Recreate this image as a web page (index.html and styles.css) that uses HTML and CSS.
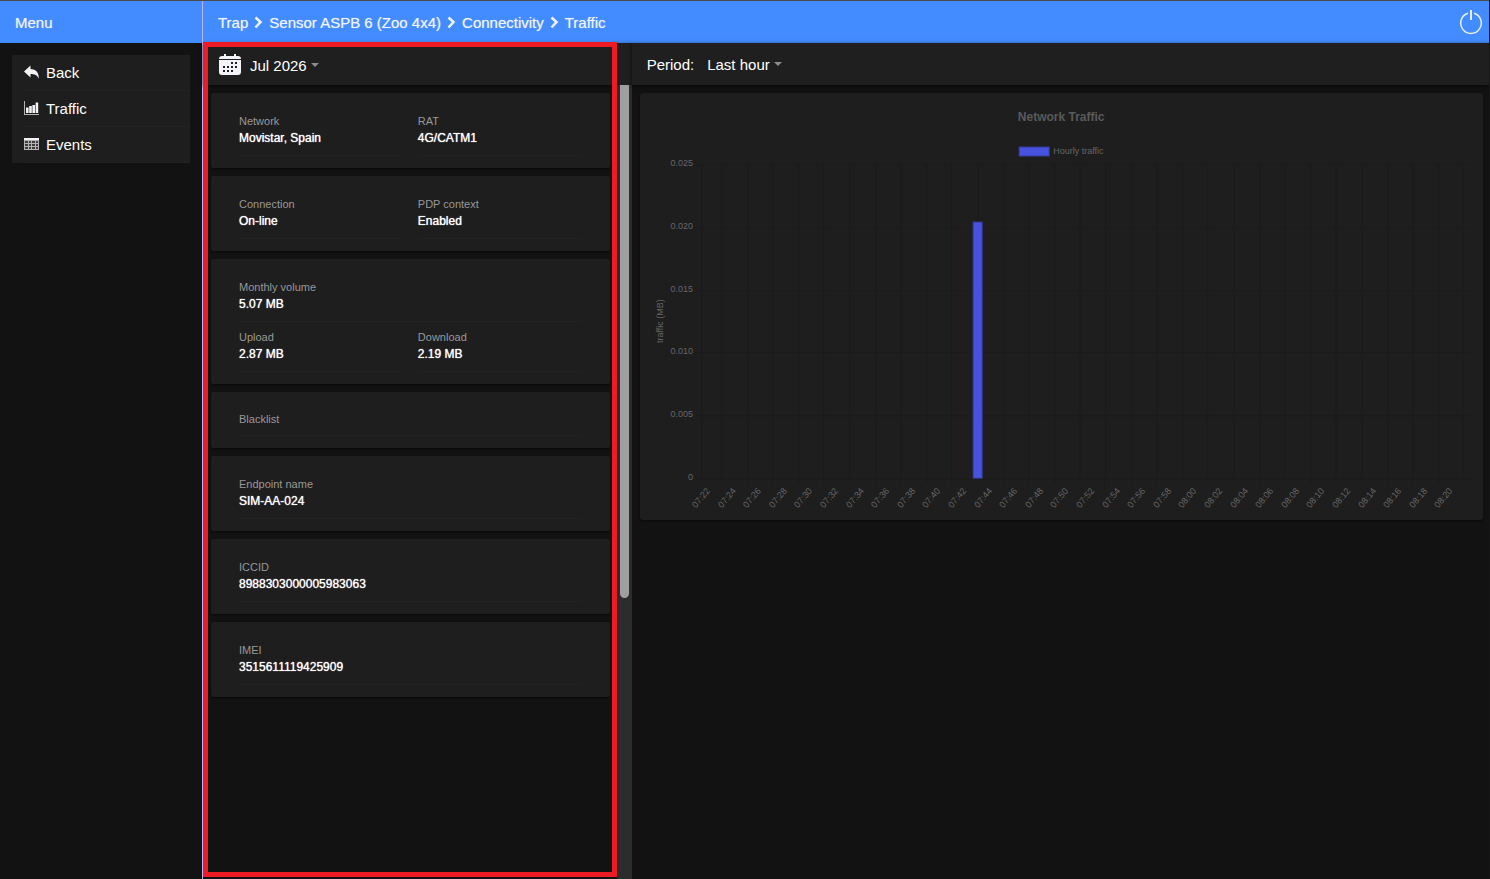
FILE: index.html
```html
<!DOCTYPE html>
<html lang="en">
<head>
    <meta charset="UTF-8">
    <meta name="viewport" content="width=device-width, initial-scale=1.0">
    <title>Traffic</title>
    <link rel="stylesheet" href="styles.css">
</head>
<body>

<aside class="sidebar">
    <header class="navbar">Menu</header>
    <nav class="menu">
        <a href="#back">
            <svg class="icon" viewBox="0 0 15 15"><path d="M6.500 .5 0 6.500l6.500 6V9c4 0 6.800 1 8.300 4.800C15 7.500 12 4.200 6.500 4z"/></svg>
            Back
        </a>
        <a href="#traffic">
            <svg class="icon" viewBox="0 0 15 15"><path class="dim" d="M0 0h1v13h14v1H0z"/><path d="M2 6.500h2.600V12H2zM5.200 5h2.600v7H5.200zM8.400 4H11v8H8.400zM11.600 1.500h2.600V12h-2.600z"/></svg>
            Traffic
        </a>
        <a href="#events">
            <svg class="icon" viewBox="0 0 15 15"><path class="dim" d="M0 3h15v10H0z"/><path d="M0 1h15v2H0z"/><path class="hole" d="M1 4h3v2H1zM5 4h2v2H5zM8 4h3v2H8zM12 4h2v2h-2zM1 7h3v2H1zM5 7h2v2H5zM8 7h3v2H8zM12 7h2v2h-2zM1 10h3v2H1zM5 10h2v2H5zM8 10h3v2H8zM12 10h2v2h-2z"/></svg>
            Events
        </a>
    </nav>
</aside>

<main class="main">
    <header class="navbar">
        <nav class="breadcrumb">
            <a href="#trap">Trap</a>
            <svg viewBox="0 0 9 14"><path d="M1.500 1.500 6.500 6l-5 5.500"/></svg>
            <a href="#sensor">Sensor ASPB 6 (Zoo 4x4)</a>
            <svg viewBox="0 0 9 14"><path d="M1.500 1.500 6.500 6l-5 5.500"/></svg>
            <a href="#connectivity">Connectivity</a>
            <svg viewBox="0 0 9 14"><path d="M1.500 1.500 6.500 6l-5 5.500"/></svg>
            <a href="#traffic">Traffic</a>
        </nav>
        <button class="power" aria-label="Log out">
            <svg viewBox="0 0 24 26"><path d="M9 3.300a10.300 10.300 0 1 0 6 0"/><path class="bar" d="M12 0v10"/></svg>
        </button>
    </header>

    <div class="panes">
        <section class="pane info">
            <div class="toolbar">
                <svg class="calendar" viewBox="0 0 22 22">
                    <path d="M5 0h2v2h8V0h2v2h2a3 3 0 0 1 3 3H0a3 3 0 0 1 3-3h2zM0 6h22v12a3 3 0 0 1-3 3H3a3 3 0 0 1-3-3z"/>
                    <path class="days" d="M12 8h2v2h-2zM16 8h2v2h-2zM4 12h2v2H4zM8 12h2v2H8zM12 12h2v2h-2zM16 12h2v2h-2zM4 16h2v2H4zM8 16h2v2H8zM12 16h2v2h-2z"/>
                </svg>
                <label class="picker"><select aria-label="Month"><option>Jul 2026</option></select></label>
            </div>
            <div class="scroll">
                <div class="cards">
                    <dl class="card">
                        <div class="item"><dt>Network</dt><dd>Movistar, Spain</dd></div>
                        <div class="item"><dt>RAT</dt><dd>4G/CATM1</dd></div>
                    </dl>
                    <dl class="card">
                        <div class="item"><dt>Connection</dt><dd>On-line</dd></div>
                        <div class="item"><dt>PDP context</dt><dd>Enabled</dd></div>
                    </dl>
                    <dl class="card">
                        <div class="item wide"><dt>Monthly volume</dt><dd>5.07 MB</dd></div>
                        <div class="item"><dt>Upload</dt><dd>2.87 MB</dd></div>
                        <div class="item"><dt>Download</dt><dd>2.19 MB</dd></div>
                    </dl>
                    <dl class="card short">
                        <div class="item wide"><dt>Blacklist</dt></div>
                    </dl>
                    <dl class="card">
                        <div class="item wide"><dt>Endpoint name</dt><dd>SIM-AA-024</dd></div>
                    </dl>
                    <dl class="card">
                        <div class="item wide"><dt>ICCID</dt><dd>8988303000005983063</dd></div>
                    </dl>
                    <dl class="card">
                        <div class="item wide"><dt>IMEI</dt><dd>3515611119425909</dd></div>
                    </dl>
                </div>
                <div class="track"><div class="thumb"></div></div>
            </div>
            <div class="frame"></div>
        </section>

        <section class="pane">
            <div class="toolbar">
                <label for="period">Period:</label>
                <span class="picker"><select id="period"><option>Last hour</option></select></span>
            </div>
            <div class="chart-card">
                <svg id="chart" class="chart" viewBox="0 0 843 427">
                    <text class="title" x="421" y="28">Network Traffic</text>
                    <rect class="bar" x="379" y="54" width="30" height="9"/>
                    <text x="413" y="61">Hourly traffic</text>
                    <text class="axis" transform="translate(23 228) rotate(-90)">traffic (MB)</text>
                </svg>
            </div>
        </section>
    </div>
</main>

<script src="chart.js"></script>
</body>
</html>
```
FILE: styles.css
```css
* {
    box-sizing: border-box;
}

body {
    display: flex;
    min-height: 100vh;
    margin: 0;
    border-top: 1px solid #4a4a4a;
    border-right: 1px solid #171717;
    background-color: #121212;
    color: #fff;
    font-family: "Liberation Sans", Arial, sans-serif;
    font-size: 15px;
}

a {
    color: inherit;
    text-decoration: none;
}

.sidebar {
    flex: 0 0 203px;
    border-right: 1px solid #b9b4f5;
}

.main {
    flex: 1;
    display: flex;
    flex-direction: column;
    min-width: 0;
}

.navbar {
    display: flex;
    align-items: center;
    justify-content: space-between;
    height: 42px;
    padding: 1px 6px 0 15px;
    background-color: #438cff;
    color: #f0f4ff;
    text-shadow: 0 0 1px rgba(240, 244, 255, 0.6);
}

.breadcrumb {
    display: flex;
    align-items: center;
    gap: 6px;
}

.breadcrumb svg {
    width: 9px;
    height: 14px;
    fill: none;
    stroke: #f0f4ff;
    stroke-width: 2.5;
}

.power {
    display: flex;
    padding: 0;
    border: none;
    background: none;
    cursor: pointer;
}

.power svg {
    width: 24px;
    height: 26px;
    fill: none;
    stroke: #e6efff;
    stroke-width: 1.5;
}

.power .bar {
    stroke-width: 2;
}

/* Side menu */
.menu {
    margin: 12px;
    padding-left: 12px;
    background-color: #1e1e1e;
}

.menu a {
    display: flex;
    align-items: center;
    gap: 7px;
    height: 36px;
    border-bottom: 1px solid #222;
}

.icon {
    width: 15px;
    height: 15px;
    fill: #f2f2f7;
}

.icon .dim {
    fill: #b4b4b4;
}

.icon .hole {
    fill: #3c3c3c;
}

/* Panes */
.panes {
    flex: 1;
    display: grid;
    grid-template-columns: 1fr 2fr;
}

.pane {
    position: relative;
    display: flex;
    flex-direction: column;
    min-width: 0;
}

.toolbar {
    display: flex;
    align-items: center;
    gap: 13px;
    height: 42px;
    padding: 0 15px;
    background-color: #1f1f1f;
    box-shadow: 0 1px 4px rgba(0, 0, 0, 0.6);
}

.info .toolbar {
    gap: 9px;
    padding: 2px 16px 0;
}

.calendar {
    width: 22px;
    height: 22px;
    fill: #f4f4f8;
}

.calendar .days {
    fill: #1f1f1f;
}

.picker {
    display: flex;
    align-items: center;
    gap: 4px;
}

.picker::after {
    content: "";
    border: 4px solid transparent;
    border-top-color: #8c8c8c;
    border-bottom: none;
}

select {
    appearance: none;
    padding: 0;
    border: none;
    background: none;
    color: #fff;
    font: inherit;
}

.scroll {
    flex: 1;
    display: flex;
}

.cards {
    flex: 1;
    display: flex;
    flex-direction: column;
    gap: 8px;
    padding: 8px 7px 8px 8px;
}

.card {
    display: grid;
    grid-template-columns: 1fr 1fr;
    gap: 7px 15px;
    margin: 0;
    padding: 20px 28px 12px;
    border-radius: 2px;
    background-color: #1e1e1e;
    box-shadow: 0 1px 2px rgba(0, 0, 0, 0.5);
}

.card.short {
    padding: 19px 28px 12px;
}

.item {
    padding-bottom: 8px;
    border-bottom: 1px solid #222;
}

.wide {
    grid-column: span 2;
}

.item dt {
    color: #989898;
    font-size: 11px;
    line-height: 16px;
}

.item dd {
    margin: 0;
    font-size: 12px;
    line-height: 18px;
    text-shadow: 0 0 1px #fff;
}

.track {
    width: 15px;
    padding: 0 3px;
    background-color: #2c2c2c;
}

.thumb {
    height: 513px;
    border-radius: 0 0 5px 5px;
    background-color: #9f9f9f;
}

.frame {
    position: absolute;
    top: -1px;
    right: 15px;
    bottom: 2px;
    left: 0;
    border: 5px solid #ed1c24;
    pointer-events: none;
}

/* Chart */
.chart-card {
    margin: 8px 6px 8px 8px;
    border-radius: 3px;
    background-color: #1e1e1e;
    box-shadow: 0 1px 2px rgba(0, 0, 0, 0.5);
}

.chart {
    display: block;
    width: 100%;
    fill: #666;
    font-size: 9px;
}

.chart .title {
    fill: #5a5a5a;
    font-size: 12px;
    font-weight: bold;
    text-anchor: middle;
}

.chart .axis {
    text-anchor: middle;
}

.chart .tick {
    text-anchor: end;
}

.chart .grid {
    stroke: #1b1b1b;
}

.chart .bar {
    fill: #4752df;
    stroke: #373d96;
}
```
FILE: chart.js
```js
var chart = document.getElementById('chart');
var plot = {left: 61, right: 830, top: 71, bottom: 385};
var firstTick = 82;
var step = 25.6;

function add(tag, attrs, text) {
    var el = document.createElementNS('http://www.w3.org/2000/svg', tag);
    Object.keys(attrs).forEach(function (key) {
        el.setAttribute(key, attrs[key]);
    });
    if (text) {
        el.textContent = text;
    }
    chart.appendChild(el);
}

function pad(n) {
    return n < 10 ? '0' + n : '' + n;
}

// y axis
['0.025', '0.020', '0.015', '0.010', '0.005', '0'].forEach(function (label, i) {
    var y = Math.round(plot.top + i * (plot.bottom - plot.top) / 5);
    add('line', {'class': 'grid', x1: plot.left - 5, x2: plot.right, y1: y + 0.5, y2: y + 0.5});
    add('text', {'class': 'tick', x: 53, y: y + 2}, label);
});

// x axis, one label every two minutes from 07:22
add('line', {'class': 'grid', x1: plot.left + 0.5, x2: plot.left + 0.5, y1: plot.top, y2: plot.bottom + 5});
for (var i = 0; i < 30; i++) {
    var minutes = 7 * 60 + 22 + i * 2;
    var x = Math.round(firstTick + i * step) - 0.5;
    var label = pad(Math.floor(minutes / 60)) + ':' + pad(minutes % 60);
    add('line', {'class': 'grid', x1: x, x2: x, y1: plot.top, y2: plot.bottom + 5});
    add('text', {'class': 'tick', transform: 'translate(' + (x - 11) + ' 398) rotate(-50)'}, label);
}

// traffic at 07:43
var barTop = Math.round(plot.bottom - 0.0203 / 0.025 * (plot.bottom - plot.top)) - 1;
add('rect', {'class': 'bar', x: 333, y: barTop, width: 9, height: plot.bottom - barTop});
```
